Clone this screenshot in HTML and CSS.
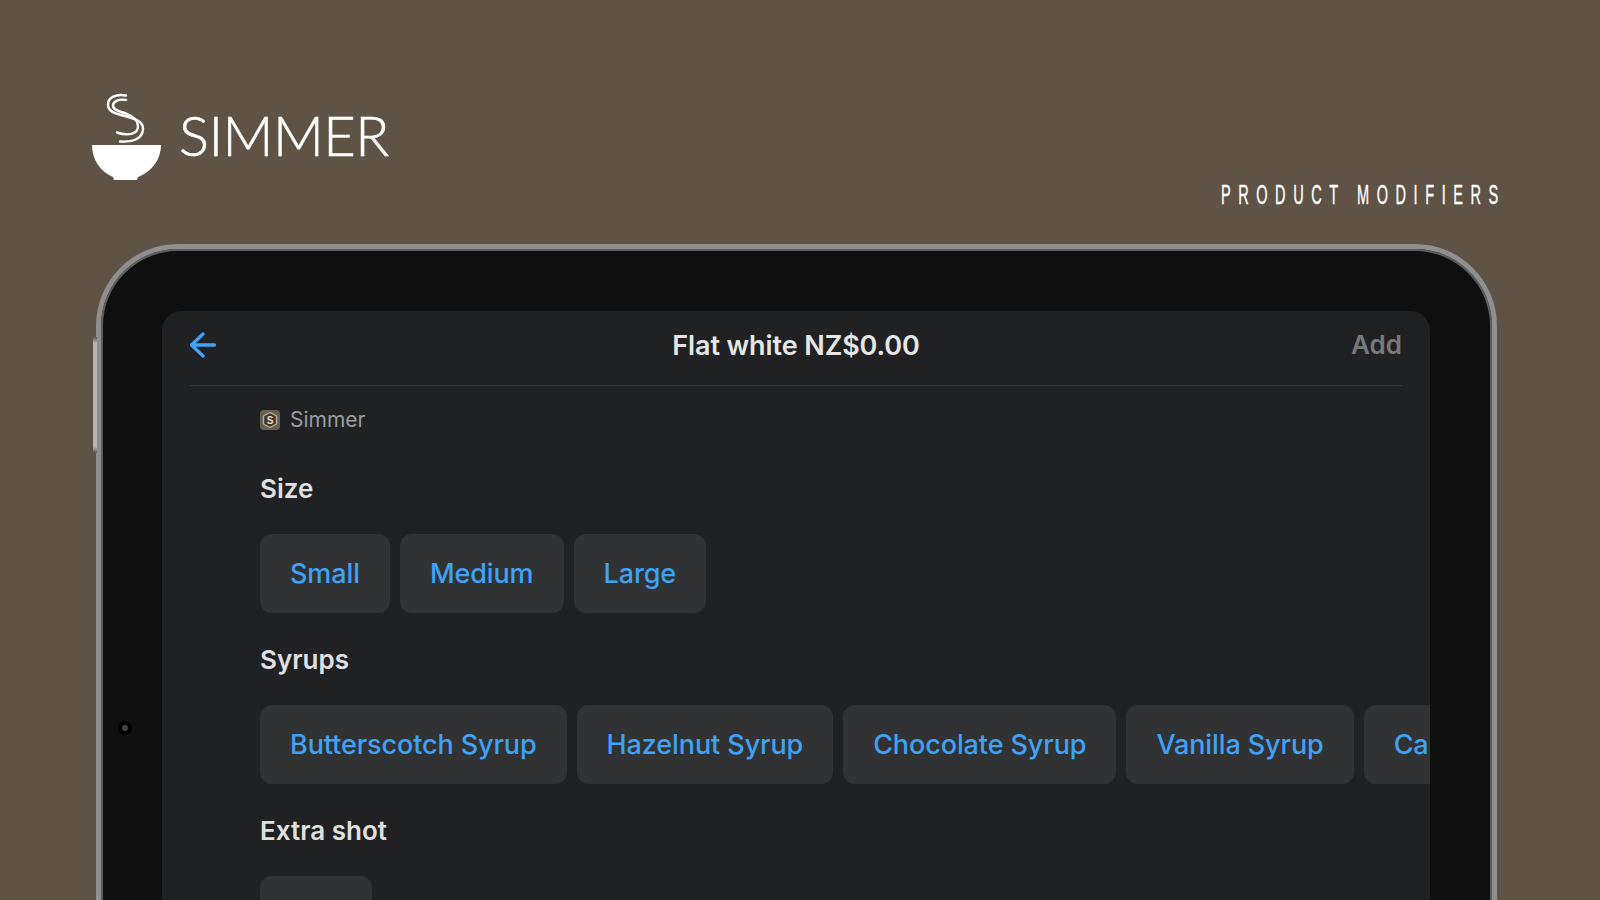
FILE: index.html
```html
<!DOCTYPE html>
<html lang="en">
<head>
  <meta charset="UTF-8" />
  <title>Simmer - Product modifiers</title>
  <link rel="stylesheet" href="styles.css">
</head>
<body>
  <header class="top">
    <div class="brand">
      <svg class="brand-icon" width="71" height="90" viewBox="0 0 71 90">
        <g fill="none" stroke="#fff" stroke-width="2.4" stroke-linecap="round" transform="translate(2 1.5)">
          <path d="M33 2 C23 0 15 4 15 11 C15 18 22 20 30 22 C42 25 50 28 50 35 C50 44 42 49 27 48" />
          <path d="M33 6.5 C26 5 20 8 20 12 C20 17 27 18 33 20 C41 23 45 28 45 33 C45 40 36 43 24 39" />
        </g>
        <path fill="#fff" d="M1 53 H70 C70 68 60 80 47 85 L46 88 H23 L22 85 C10 80 1 68 1 53 Z" />
      </svg>
      <span class="brand-name">SIMMER</span>
    </div>
    <div class="subtitle">PRODUCT MODIFIERS</div>
  </header>

  <div class="device">
    <span class="side-btn"></span>
    <span class="camera"></span>
    <main class="screen">
      <div class="nav">
        <svg class="back" width="26" height="26" viewBox="0 0 26 26">
          <path d="M24.5 13 H2 M13 2 L1.5 13 L13 24" fill="none" stroke="#3fa2f5" stroke-width="3.4" stroke-linecap="round" stroke-linejoin="round" />
        </svg>
        <div class="title">Flat white NZ$0.00</div>
        <div class="add">Add</div>
      </div>

      <div class="content">
        <div class="shop">
          <svg width="20" height="20" viewBox="0 0 20 20">
            <rect x="0" y="0" width="20" height="20" rx="4" fill="#6b5f50" />
            <path d="M10 2.5 L16.5 6 V14 L10 17.5 L3.5 14 V6 Z" fill="#40382f" stroke="#b8ad9d" stroke-width="1.4" stroke-linejoin="round" />
            <text x="10" y="13.5" font-size="10" font-family="Liberation Sans" font-weight="700" text-anchor="middle" fill="#e0dbd2">S</text>
          </svg>
          <span>Simmer</span>
        </div>

        <h3>Size</h3>
        <div class="options">
          <div class="opt">Small</div>
          <div class="opt">Medium</div>
          <div class="opt">Large</div>
        </div>

        <h3>Syrups</h3>
        <div class="options">
          <div class="opt">Butterscotch Syrup</div>
          <div class="opt">Hazelnut Syrup</div>
          <div class="opt">Chocolate Syrup</div>
          <div class="opt">Vanilla Syrup</div>
          <div class="opt">Caramel Syrup</div>
        </div>

        <h3>Extra shot</h3>
        <div class="options">
          <div class="opt opt-short"></div>
        </div>
      </div>
    </main>
  </div>
</body>
</html>
```

FILE: styles.css
```css
* {
  box-sizing: border-box;
}
html, body {
  height: 900px;
  margin: 0;
  overflow: hidden;
}
body {
  background: #5f5346;
  font-family: Inter, 'Noto Sans', sans-serif;
  color: #fff;
}

/* top strip */
.top {
  display: flex;
  justify-content: space-between;
  align-items: flex-end;
  height: 244px;
  padding: 92px 94px 34px 91px;
}
.brand {
  display: flex;
  align-items: flex-start;
  gap: 17px;
  align-self: flex-start;
}
.brand-icon {
  display: block;
}
.brand-name {
  font-family: Lato, sans-serif;
  font-weight: 300;
  font-size: 56px;
  line-height: 56px;
  letter-spacing: -0.5px;
  -webkit-text-stroke: 0.6px #fff;
  margin-top: 15px;
}
/* no condensed face installed, so squeeze it */
.subtitle {
  font-family: 'Liberation Sans', sans-serif;
  font-size: 28px;
  line-height: 30px;
  letter-spacing: 14.5px;
  -webkit-text-stroke: 0.4px #fff;
  white-space: nowrap;
  transform: scaleX(0.52);
  transform-origin: right center;
}

/* tablet */
.device {
  position: relative;
  width: 1401px;
  height: 700px;
  margin-left: 96px;
  padding: 62px 62px 0 61px;
  background: #0f0f0f;
  border: 5px solid #8f8f8f;
  border-bottom: 0;
  border-radius: 82px 82px 0 0;
  box-shadow: inset 0 0 0 2px #5c5c5c;
}
.side-btn {
  position: absolute;
  left: -8px;
  top: 88px;
  width: 4px;
  height: 116px;
  background: linear-gradient(#555 0, #b4b4b4 6px, #b4b4b4 110px, #555 100%);
  border-radius: 2px 0 0 2px;
}
.camera {
  position: absolute;
  left: 17px;
  top: 472px;
  width: 14px;
  height: 14px;
  border-radius: 50%;
  border: 4px solid #020202;
  background: #444;
}
.screen {
  height: 100%;
  background: #202123;
  border-radius: 20px 20px 0 0;
  overflow: hidden;
}
.nav {
  display: grid;
  grid-template-columns: 1fr auto 1fr;
  align-items: center;
  height: 75px;
  margin: 0 28px;
  padding-bottom: 6px;
  border-bottom: 1px solid #36373a;
}
.title {
  font-size: 27px;
  font-weight: 600;
  letter-spacing: -0.1px;
  color: #e6e6e6;
}
.add {
  justify-self: end;
  margin-bottom: 2px;
  font-size: 26px;
  font-weight: 600;
  color: #77797b;
}
.content {
  padding: 0 0 0 98px;
}
.shop {
  display: flex;
  align-items: center;
  gap: 10px;
  height: 67px;
  margin-bottom: 18px;
  font-size: 21px;
  color: #9a9c9e;
}
h3 {
  margin: 0;
  font-size: 26px;
  font-weight: 600;
  line-height: 36px;
  color: #e0e0e0;
}
.options {
  display: flex;
  gap: 10px;
  margin: 27px 0 29px;
}
.opt {
  flex: none;
  height: 79px;
  padding: 0 30px;
  display: flex;
  align-items: center;
  background: #313234;
  border-radius: 12px;
  font-size: 27px;
  font-weight: 500;
  letter-spacing: -0.1px;
  color: #3fa2f5;
  white-space: nowrap;
}
.opt-short {
  width: 112px;
}
```
